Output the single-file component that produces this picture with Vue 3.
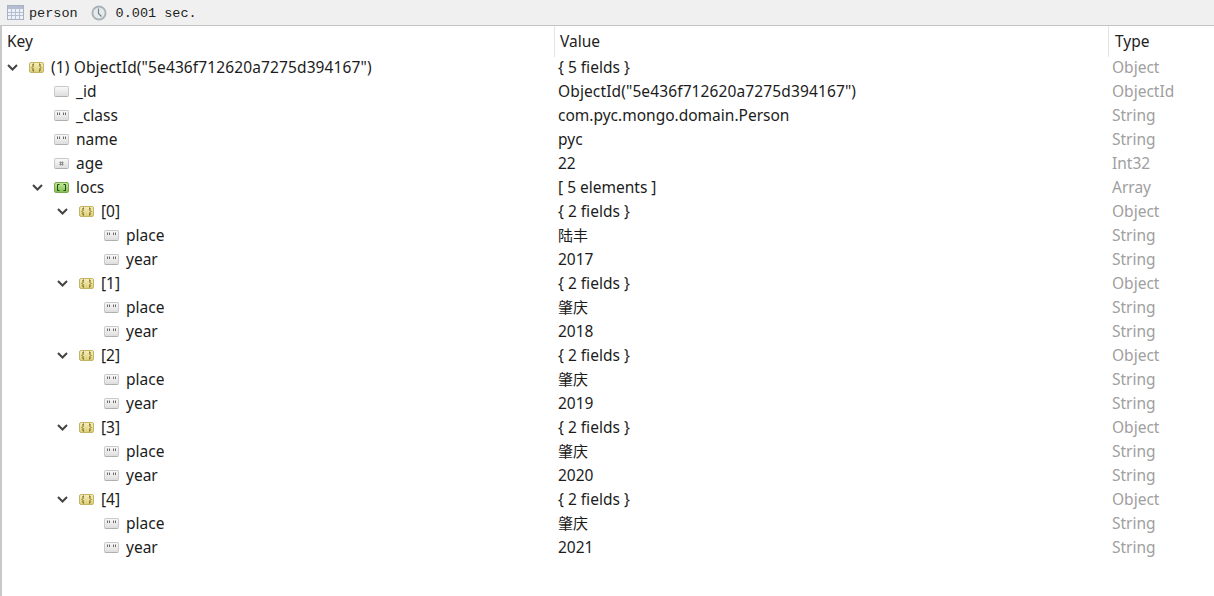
<script setup>
const arr = (i, year, place) => [
  { level: 2, key: `[${i}]`, value: '{ 2 fields }', type: 'Object', icon: 'obj', open: true },
  { level: 3, key: 'place', value: place, type: 'String', icon: 'str', cjk: true },
  { level: 3, key: 'year', value: year, type: 'String', icon: 'str' },
];

const glyphs = {
  obj: 'M4 1H3V3.5L2 4.5L3 5.5V8H4M9 1H10V3.5L11 4.5L10 5.5V8H9',
  arr: 'M4.5 1.5H2.5V7.5H4.5M8.5 1.5H10.5V7.5H8.5',
  str: 'M2.5 1.5V4M4.5 1.5V4M8.5 1.5V4M10.5 1.5V4',
  num: 'M5.5 2.5V6.5M7.5 2.5V6.5M4.5 3.5H8.5M4.5 5.5H8.5',
  id: '',
};

const rows = [
  { level: 0, key: '(1) ObjectId("5e436f712620a7275d394167")', value: '{ 5 fields }', type: 'Object', icon: 'obj', open: true, oid: true },
  { level: 1, key: '_id', value: 'ObjectId("5e436f712620a7275d394167")', type: 'ObjectId', icon: 'id', oid: true },
  { level: 1, key: '_class', value: 'com.pyc.mongo.domain.Person', type: 'String', icon: 'str' },
  { level: 1, key: 'name', value: 'pyc', type: 'String', icon: 'str' },
  { level: 1, key: 'age', value: '22', type: 'Int32', icon: 'num' },
  { level: 1, key: 'locs', value: '[ 5 elements ]', type: 'Array', icon: 'arr', open: true },
  ...arr(0, '2017', '陆丰'),
  ...arr(1, '2018', '肇庆'),
  ...arr(2, '2019', '肇庆'),
  ...arr(3, '2020', '肇庆'),
  ...arr(4, '2021', '肇庆'),
];
</script>

<template>
  <div class="page">
    <div class="toolbar">
      <svg class="tb-icon" width="17" height="15" viewBox="0 0 17 15">
        <rect x="0.5" y="0.5" width="16" height="14" fill="#eef1f7" stroke="#a9b2c2" />
        <rect x="1" y="1" width="15" height="3" fill="#b4bed0" />
        <path d="M1 7.5h15M1 10.5h15M4.5 4v10M8.5 4v10M12.5 4v10" stroke="#b5bfd0" stroke-width="1" fill="none" />
      </svg>
      <span class="tb-text name">person</span>
      <svg class="tb-icon clock" width="16" height="16" viewBox="0 0 16 16">
        <circle cx="8" cy="8" r="7.5" fill="#a9b3b7" />
        <circle cx="8" cy="8" r="5.6" fill="#e4e9ec" />
        <path d="M7.5 3.5V8.5L10.5 11.5" stroke="#78838a" stroke-width="1.2" fill="none" />
      </svg>
      <span class="tb-text">0.001 sec.</span>
    </div>

    <div class="table">
      <div class="head">
        <div class="hcell first">Key</div>
        <div class="hcell">Value</div>
        <div class="hcell">Type</div>
      </div>

      <div v-for="(row, i) in rows" :key="i" class="row">
        <div class="key" :class="'lv' + row.level">
          <span class="arrow">
            <svg v-if="row.open" width="11" height="7" viewBox="0 0 11 7">
              <path d="M1 1L5.5 5.5L10 1" fill="none" stroke="#444" stroke-width="2" />
            </svg>
          </span>
          <span class="ico" :class="row.icon">
            <svg width="13" height="9" viewBox="0 0 13 9">
              <path :d="glyphs[row.icon]" fill="none" stroke="currentColor" stroke-width="1" />
            </svg>
          </span>
          <span class="text" :class="{ oid: row.oid }">{{ row.key }}</span>
        </div>
        <div class="value" :class="{ cjk: row.cjk, oid: row.icon === 'id' }">{{ row.value }}</div>
        <div class="type">{{ row.type }}</div>
      </div>
    </div>
  </div>
</template>

<style>
html,
body {
  margin: 0;
  background: #fff;
}
</style>

<style scoped>
.page {
  width: 1214px;
  height: 596px;
  overflow: hidden;
  font-family: "Noto Sans", "Noto Sans CJK SC", sans-serif;
  font-size: 15.5px;
  color: #1c1c1c;
  background: #fff;
}

.toolbar {
  display: flex;
  align-items: center;
  box-sizing: border-box;
  height: 26px;
  padding: 0 0 0 7px;
  background: #f0f0f0;
  border-bottom: 1px solid #c4c4c4;
}

.tb-icon {
  flex: none;
}

.tb-text {
  font-family: "Liberation Mono", monospace;
  font-size: 13.5px;
  color: #222;
  margin-left: 5px;
  padding-top: 2px;
}

.clock {
  margin-left: 13px;
  margin-right: 4px;
}

.table {
  height: 570px;
  border-left: 2px solid #c8c8c8;
  box-sizing: border-box;
}

.head {
  display: grid;
  grid-template-columns: 552px 554px 1fr;
  height: 29px;
}

.hcell {
  border-left: 1px solid #e4e4e4;
  padding-left: 5px;
  line-height: 31px;
  color: #222;
}

.hcell:last-child {
  padding-left: 6px;
}

.hcell.first {
  border-left: none;
}

.row {
  display: grid;
  grid-template-columns: 552px 554px 1fr;
  grid-template-rows: 24px;
  height: 24px;
  line-height: 24px;
  white-space: nowrap;
}

.key {
  display: flex;
  align-items: center;
}

.lv0 {
  padding-left: 4px;
}

.lv1 {
  padding-left: 29px;
}

.lv2 {
  padding-left: 54px;
}

.lv3 {
  padding-left: 79px;
}

.arrow {
  width: 22px;
  padding-left: 1px;
  flex: none;
  display: flex;
  align-items: center;
}

.ico {
  flex: none;
  display: flex;
  box-sizing: border-box;
  width: 15px;
  height: 11px;
  border-radius: 2px;
  border: 1px solid #c9c9c9;
  border-bottom-color: #b0b0b0;
  background: linear-gradient(#f8f8f8, #dedede);
  color: #6a6a6a;
}

.obj {
  border-color: #c4b565;
  background: linear-gradient(#f5eeb4, #dccf7c);
  color: #6a5a10;
}

.arr {
  border-color: #78a84a;
  background: linear-gradient(#c0e494, #86c058);
  color: #1f4a10;
}

.num {
  color: #8a8a8a;
}

.text {
  margin-left: 7px;
}

.oid {
  letter-spacing: 0.12px;
}

.value {
  padding-left: 4px;
}

.cjk {
  font-size: 15px;
}

.type {
  padding-left: 4px;
  color: #a0a0a0;
}
</style>
